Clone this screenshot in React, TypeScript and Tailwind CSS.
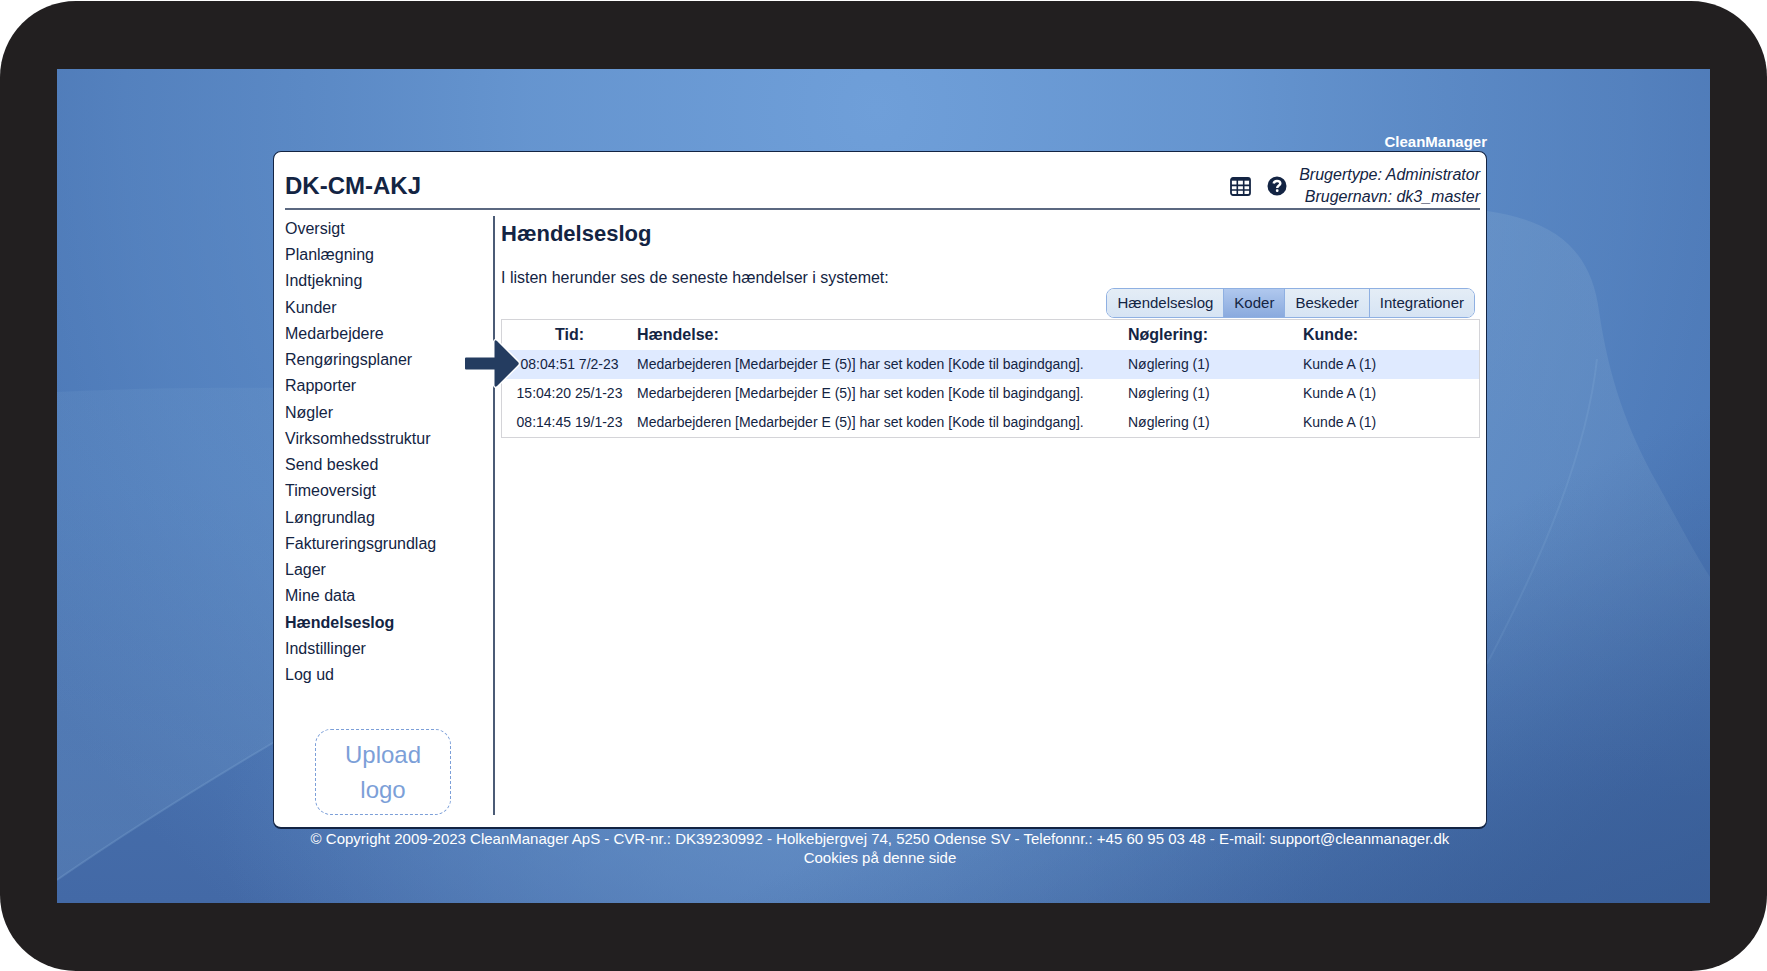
import { clsx } from "clsx";

type LogEntry = {
  time: string;
  event: string;
  keyring: string;
  customer: string;
};

const menuItems = [
  "Oversigt",
  "Planlægning",
  "Indtjekning",
  "Kunder",
  "Medarbejdere",
  "Rengøringsplaner",
  "Rapporter",
  "Nøgler",
  "Virksomhedsstruktur",
  "Send besked",
  "Timeoversigt",
  "Løngrundlag",
  "Faktureringsgrundlag",
  "Lager",
  "Mine data",
  "Hændelseslog",
  "Indstillinger",
  "Log ud",
];

const tabs = ["Hændelseslog", "Koder", "Beskeder", "Integrationer"];

const eventText =
  "Medarbejderen [Medarbejder E (5)] har set koden [Kode til bagindgang].";

const entries: LogEntry[] = [
  { time: "08:04:51 7/2-23", event: eventText, keyring: "Nøglering (1)", customer: "Kunde A (1)" },
  { time: "15:04:20 25/1-23", event: eventText, keyring: "Nøglering (1)", customer: "Kunde A (1)" },
  { time: "08:14:45 19/1-23", event: eventText, keyring: "Nøglering (1)", customer: "Kunde A (1)" },
];

function Wallpaper() {
  return (
    <svg
      className="absolute inset-0 h-full w-full"
      viewBox="0 0 1653 834"
      preserveAspectRatio="none"
      aria-hidden="true"
    >
      <defs>
        <linearGradient id="base" x1="0" y1="0" x2="0" y2="1">
          <stop offset="0" stopColor="#4b76b4" />
          <stop offset="0.5" stopColor="#4a76b5" />
          <stop offset="1" stopColor="#4369a6" />
        </linearGradient>
        <radialGradient
          id="glow"
          gradientUnits="userSpaceOnUse"
          cx="0"
          cy="0"
          r="1"
          gradientTransform="translate(820 40) scale(1000 1050)"
        >
          <stop offset="0" stopColor="#6f9fd9" />
          <stop offset="0.35" stopColor="#6a9ad4" stopOpacity="0.85" />
          <stop offset="0.75" stopColor="#6292cd" stopOpacity="0.4" />
          <stop offset="1" stopColor="#5a88c4" stopOpacity="0" />
        </radialGradient>
        <radialGradient
          id="floor"
          gradientUnits="userSpaceOnUse"
          cx="0"
          cy="0"
          r="1"
          gradientTransform="translate(720 760) scale(560 260)"
        >
          <stop offset="0" stopColor="#6690c6" stopOpacity="0.7" />
          <stop offset="1" stopColor="#6690c6" stopOpacity="0" />
        </radialGradient>
        <linearGradient id="hill" x1="0" y1="0" x2="0" y2="1">
          <stop offset="0" stopColor="#84a9d0" stopOpacity="0.28" />
          <stop offset="0.5" stopColor="#84a9d0" stopOpacity="0.22" />
          <stop offset="0.85" stopColor="#84a9d0" stopOpacity="0" />
        </linearGradient>
        <linearGradient id="wave" x1="0" y1="0" x2="0" y2="1">
          <stop offset="0" stopColor="#7fa8d2" stopOpacity="0.14" />
          <stop offset="1" stopColor="#7fa8d2" stopOpacity="0.22" />
        </linearGradient>
        <linearGradient id="corner" x1="0" y1="0" x2="1" y2="1">
          <stop offset="0.7" stopColor="#345890" stopOpacity="0" />
          <stop offset="1" stopColor="#345890" stopOpacity="0.7" />
        </linearGradient>
      </defs>
      <rect width="1653" height="834" fill="url(#base)" />
      <rect width="1653" height="834" fill="url(#glow)" />
      <rect width="1653" height="834" fill="url(#floor)" />
      <path
        d="M1350 142H1430C1500 152 1534 182 1542 242C1552 310 1570 360 1600 414C1620 450 1635 480 1653 508V834H1350Z"
        fill="url(#hill)"
      />
      <path
        d="M1540 290C1530 380 1490 480 1430 595"
        fill="none"
        stroke="#8db2dc"
        strokeOpacity="0.2"
        strokeWidth="2"
      />
      <path d="M0 323C80 319 150 318 260 319V648Q110 735 0 811Z" fill="url(#wave)" />
      <path
        d="M0 811Q110 735 260 648"
        fill="none"
        stroke="#8db2dc"
        strokeOpacity="0.25"
        strokeWidth="2"
      />
      <rect width="1653" height="834" fill="url(#corner)" />
    </svg>
  );
}

function TableIcon() {
  return (
    <svg width="21" height="19" viewBox="0 0 21 19" fill="none" aria-hidden="true">
      <rect x="1" y="1" width="19" height="17" rx="2" stroke="#132443" strokeWidth="1.8" />
      <path d="M1.5 2.4H19.5" stroke="#132443" strokeWidth="2.6" />
      <path d="M1 8.4H20M1 13H20M7.3 3V18M13.7 3V18" stroke="#132443" strokeWidth="1.6" />
    </svg>
  );
}

function HelpIcon() {
  return (
    <svg width="20" height="20" viewBox="0 0 20 20" fill="none" aria-hidden="true">
      <circle cx="10" cy="10" r="9.5" fill="#132443" />
      <path
        d="M6.7 7.5C7 5.7 8.2 4.9 10 4.9C12 4.9 13.3 5.9 13.3 7.5C13.3 9.6 10.2 9.6 10.2 12"
        stroke="#fff"
        strokeWidth="2.5"
      />
      <rect x="8.9" y="13.3" width="2.6" height="2.6" rx="0.8" fill="#fff" />
    </svg>
  );
}

function PointerArrow() {
  return (
    <svg
      className="pointer-events-none absolute top-[18px] -left-[38px]"
      width="56"
      height="51"
      viewBox="0 0 56 51"
      aria-hidden="true"
    >
      <path
        d="M2 19.5H30.5V3.5Q31 1.5 33 3L54 24Q55.5 25.5 54 27L33 48Q31 49.5 30.5 47.5V31.5H2Q1 31.5 1 30.5V20.5Q1 19.5 2 19.5Z"
        fill="#243c60"
        stroke="#fff"
        strokeWidth="3"
        strokeLinejoin="round"
        paintOrder="stroke"
      />
    </svg>
  );
}

function Sidebar() {
  return (
    <aside className="flex w-[210px] shrink-0 flex-col border-r-2 border-[#4b5b76]">
      <nav className="flex flex-1 flex-col justify-between pt-px">
        {menuItems.map((item) => (
          <a
            key={item}
            href="#"
            className={clsx("text-base leading-6", item === "Hændelseslog" && "font-bold")}
          >
            {item}
          </a>
        ))}
      </nav>
      <button
        type="button"
        className="mt-[42px] ml-[30px] w-[136px] rounded-2xl border border-dashed border-[#7c9fd8] py-[7px] text-2xl leading-[35px] text-[#7c9fd8]"
      >
        Upload
        <br />
        logo
      </button>
    </aside>
  );
}

function Tabs() {
  return (
    <div className="mr-[5px] flex self-end overflow-hidden rounded-lg border border-[#8fb0e2]">
      {tabs.map((tab) => (
        <button
          key={tab}
          type="button"
          className={clsx(
            "border-l border-[#8fb0e2] px-2.5 text-[15px] leading-7 first:border-l-0",
            tab === "Koder"
              ? "bg-linear-to-b from-[#b0c8ee] to-[#8aaade]"
              : "bg-linear-to-b from-[#e4edf6] to-[#d6e4f4]",
          )}
        >
          {tab}
        </button>
      ))}
    </div>
  );
}

function EventTable() {
  return (
    <div className="relative mt-px border border-[#d4d4d8]">
      <table className="w-full table-fixed border-collapse text-left">
        <colgroup>
          <col className="w-[135px]" />
          <col />
          <col className="w-[175px]" />
          <col className="w-[176px]" />
        </colgroup>
        <thead>
          <tr className="text-base leading-[30px]">
            <th className="text-center">Tid:</th>
            <th>Hændelse:</th>
            <th>Nøglering:</th>
            <th>Kunde:</th>
          </tr>
        </thead>
        <tbody>
          {entries.map((entry, index) => (
            <tr
              key={entry.time}
              className={clsx("text-sm leading-[29px]", index === 0 && "bg-[#dfeaff]")}
            >
              <td className="text-center">{entry.time}</td>
              <td>{entry.event}</td>
              <td>{entry.keyring}</td>
              <td>{entry.customer}</td>
            </tr>
          ))}
        </tbody>
      </table>
      <PointerArrow />
    </div>
  );
}

export default function App() {
  return (
    <div className="min-h-screen bg-white pt-px font-['Liberation_Sans',Arial,sans-serif] text-[#132443]">
      <div className="rounded-[76px] bg-[#221f20] px-[57px] py-[68px]">
        <div className="relative pt-16 pr-[223px] pb-9 pl-[216px]">
          <Wallpaper />
          <div className="relative">
            <p className="text-right text-[15px] leading-[18px] font-bold text-white">
              CleanManager
            </p>
            <main className="flex min-h-[678px] flex-col rounded-lg border border-b-2 border-[#132443] bg-white pt-3 pr-1.5 pb-3 pl-[11px]">
              <header className="flex items-center border-b-2 border-[#5b6880]">
                <h1 className="flex-1 text-2xl font-bold">DK-CM-AKJ</h1>
                <button type="button" aria-label="Kalender">
                  <TableIcon />
                </button>
                <button type="button" aria-label="Hjælp" className="ml-4">
                  <HelpIcon />
                </button>
                <p className="ml-3 text-right text-base leading-[22px] italic">
                  Brugertype: Administrator
                  <br />
                  Brugernavn: dk3_master
                </p>
              </header>
              <div className="mt-1.5 flex flex-1">
                <Sidebar />
                <section className="flex min-w-0 flex-1 flex-col pt-1 pl-1.5">
                  <h2 className="text-[22px] leading-7 font-bold">Hændelseslog</h2>
                  <p className="mt-[19px] text-base leading-[21px]">
                    I listen herunder ses de seneste hændelser i systemet:
                  </p>
                  <Tabs />
                  <EventTable />
                </section>
              </div>
            </main>
            <footer className="text-center text-[15px] leading-[19px] text-white">
              <p>
                © Copyright 2009-2023 CleanManager ApS - CVR-nr.: DK39230992 - Holkebjergvej 74,
                5250 Odense SV - Telefonnr.: +45 60 95 03 48 - E-mail: support@cleanmanager.dk
              </p>
              <a href="#">Cookies på denne side</a>
            </footer>
          </div>
        </div>
      </div>
    </div>
  );
}
